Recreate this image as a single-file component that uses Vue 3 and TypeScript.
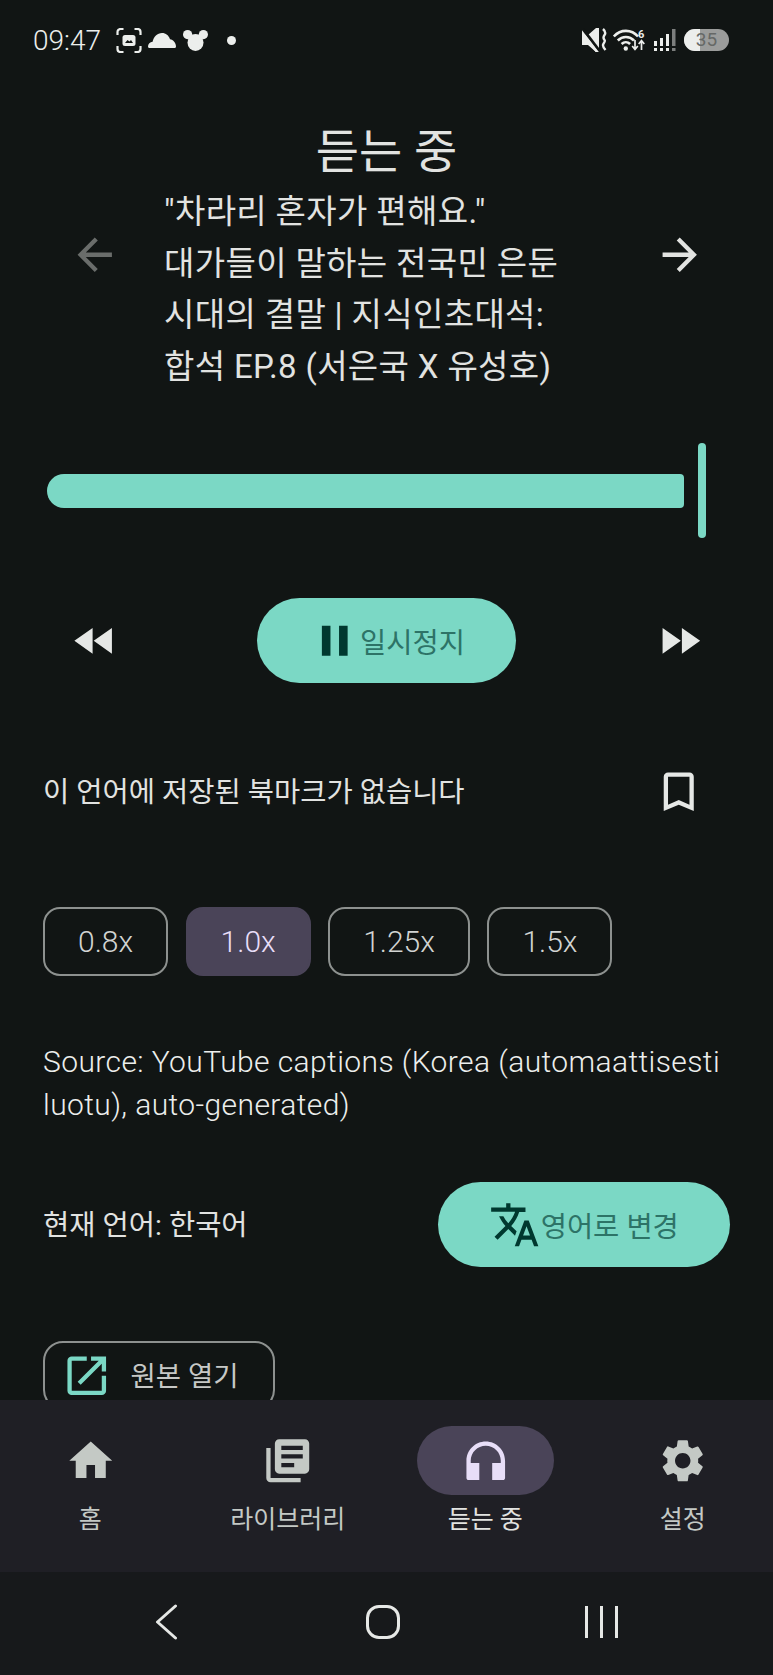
<script setup lang="ts">
import { ref } from 'vue'

const speeds = ['0.8x', '1.0x', '1.25x', '1.5x']
const currentSpeed = ref('1.0x')

const navItems = [
  { label: '홈', path: 'M10 20v-6h4v6h5v-8h3L12 3 2 12h3v8z' },
  {
    label: '라이브러리',
    path: 'M4 6H2v14c0 1.1.9 2 2 2h14v-2H4V6zm16-4H8c-1.1 0-2 .9-2 2v12c0 1.1.9 2 2 2h12c1.1 0 2-.9 2-2V4c0-1.1-.9-2-2-2zm-1 9H9V9h10v2zm-4 4H9v-2h6v2zm4-8H9V5h10v2z',
  },
  {
    label: '듣는 중',
    active: true,
    path: 'M12 3c-4.97 0-9 4.03-9 9v8c0 .55.45 1 1 1h5v-8H5v-1c0-3.87 3.13-7 7-7s7 3.13 7 7v1h-4v8h5c.55 0 1-.45 1-1v-8c0-4.97-4.03-9-9-9z',
  },
  {
    label: '설정',
    path: 'M19.14 12.94c.04-.3.06-.61.06-.94 0-.32-.02-.64-.07-.94l2.03-1.58c.18-.14.23-.41.12-.61l-1.92-3.32c-.12-.22-.37-.29-.59-.22l-2.39.96c-.5-.38-1.03-.7-1.62-.94l-.36-2.54c-.04-.24-.24-.41-.48-.41h-3.84c-.24 0-.43.17-.47.41l-.36 2.54c-.59.24-1.13.57-1.62.94l-2.39-.96c-.22-.08-.47 0-.59.22L2.74 8.87c-.12.21-.08.47.12.61l2.03 1.58c-.05.3-.09.63-.09.94s.02.64.07.94l-2.03 1.58c-.18.14-.23.41-.12.61l1.92 3.32c.12.22.37.29.59.22l2.39-.96c.5.38 1.03.7 1.62.94l.36 2.54c.05.24.24.41.48.41h3.84c.24 0 .44-.17.47-.41l.36-2.54c.59-.24 1.13-.56 1.62-.94l2.39.96c.22.08.47 0 .59-.22l1.92-3.32c.12-.22.07-.47-.12-.61l-2.01-1.58zM12 15.6c-1.98 0-3.6-1.62-3.6-3.6s1.62-3.6 3.6-3.6 3.6 1.62 3.6 3.6-1.62 3.6-3.6 3.6z',
  },
]
</script>

<template>
  <div class="screen">
    <div class="statusbar">
      <span class="clock">09:47</span>
      <svg class="st-shot" width="26" height="25" viewBox="0 0 26 25" fill="none" stroke="#eceeec" stroke-width="2.2">
        <path d="M1.5 7V4a3 3 0 0 1 3-3h3M18.5 1h3a3 3 0 0 1 3 3v3M24.5 18v3a3 3 0 0 1-3 3h-3M7.5 24h-3a3 3 0 0 1-3-3v-3" />
        <rect x="6.5" y="7" width="13" height="11" rx="2.5" fill="#eceeec" stroke="none" />
        <path d="M9 15l2.5-3 2 1.5 1.5-1.5 2 3z" fill="#111514" stroke="none" />
      </svg>
      <svg class="st-cloud" width="28" height="15" viewBox="0 0 28 15" fill="#eceeec">
        <path d="M1.5 15C.5 15 0 14.4 0 13.5c0-2.6 2-4.6 4.6-4.8C5.6 3.8 9.3 0 14 0c3.8 0 6.8 2.5 8 6.2 3.2.5 6 3.6 6 7.3 0 .9-.5 1.5-1.5 1.5z" />
      </svg>
      <svg class="st-mouse" width="25" height="21" viewBox="0 0 25 21" fill="#eceeec">
        <circle cx="4.6" cy="4.6" r="4.6" />
        <circle cx="20.4" cy="4.6" r="4.6" />
        <ellipse cx="12.5" cy="12.5" rx="8" ry="8.5" />
      </svg>
      <span class="st-dot"></span>

      <svg class="st-mute" width="25" height="24" viewBox="0 0 25 24" fill="#eceeec">
        <path d="M0 7h6l8-7h3v24h-3l-8-7H0z" />
        <path d="M0 0l19 25" stroke="#111514" stroke-width="3" />
        <path d="M1 1l17 22" stroke="#eceeec" stroke-width="2.5" transform="translate(-2 2)" />
        <path d="M21 1c2.8 2.6 2.8 4.2 1.5 6s-1.3 3.5 0 5-1.3 3.2-1.5 5 1.2 3.5 2.5 5" fill="none" stroke="#eceeec" stroke-width="2.4" />
      </svg>
      <svg class="st-wifi" width="33" height="24" viewBox="0 0 33 24" fill="none" stroke="#eceeec" stroke-width="2.6">
        <path d="M.8 8.5C7.5 1 18.5 1 25 8.5" />
        <path d="M4.8 12.5c4.5-4.6 11.7-4.6 16.2 0" />
        <path d="M8.6 16c2.5-2.4 6-2.4 8.5 0" />
        <circle cx="12.8" cy="20.5" r="2.2" fill="#eceeec" stroke="none" />
        <path d="M22 12v9m-2.8-3l2.8 3.5 2.8-3.5M28.500 22V13m-2.800 3l2.800-3.500 2.800 3.500" stroke-width="1.7" />
        <text x="25" y="10" class="st-six" fill="#eceeec" stroke="none">6</text>
      </svg>
      <svg class="st-signal" width="22" height="23" viewBox="0 0 22 23" fill="#eceeec">
        <rect x="0" y="12" width="3" height="5" />
        <rect x="0" y="19" width="3" height="3" />
        <rect x="6" y="9" width="3" height="8" />
        <rect x="6" y="19" width="3" height="3" />
        <rect x="12" y="5" width="3" height="12" />
        <rect x="12" y="19" width="3" height="3" />
        <rect x="18" y="0" width="3.5" height="17" fill="#7c7e7d" />
        <rect x="18" y="19" width="3.5" height="3" fill="#7c7e7d" />
      </svg>
      <div class="st-battery"><span class="st-level"></span><span class="st-num">35</span></div>
    </div>

    <div class="content">
      <h1 class="title">듣는 중</h1>
      <div class="track-row">
        <svg class="icon arrow dim" viewBox="0 0 24 24"><path d="M20 11H7.83l5.59-5.59L12 4l-8 8 8 8 1.41-1.41L7.83 13H20v-2z" /></svg>
        <p class="track-title">
          "차라리 혼자가 편해요."<br />대가들이 말하는 전국민 은둔<br />시대의 결말 | 지식인초대석:<br />합석 EP.8 (서은국 X 유성호)
        </p>
        <svg class="icon arrow" viewBox="0 0 24 24"><path d="M12 4l-1.41 1.41L16.17 11H4v2h12.17l-5.58 5.59L12 20l8-8z" /></svg>
      </div>

      <div class="slider">
        <div class="slider-fill"></div>
        <div class="slider-thumb"></div>
      </div>

      <div class="controls">
        <svg class="icon light" viewBox="0 0 24 24"><path d="M11 18V6l-8.5 6 8.5 6zm.5-6l8.5 6V6l-8.5 6z" /></svg>
        <button class="pill pause">
          <svg class="icon dark" viewBox="0 0 24 24"><path d="M6 19h4V5H6v14zm8-14v14h4V5h-4z" /></svg>
          <span>일시정지</span>
        </button>
        <svg class="icon light" viewBox="0 0 24 24"><path d="M4 18l8.5-6L4 6v12zm9-12v12l8.5-6L13 6z" /></svg>
      </div>

      <div class="bookmark-row">
        <span class="raised">이 언어에 저장된 북마크가 없습니다</span>
        <svg class="icon light" viewBox="0 0 24 24"><path d="M17 3H7c-1.1 0-2 .9-2 2v16l7-3 7 3V5c0-1.1-.9-2-2-2zm0 15l-5-2.18L7 18V5h10v13z" /></svg>
      </div>

      <div class="speeds">
        <button v-for="s in speeds" :key="s" class="chip" :class="{ on: s === currentSpeed }" @click="currentSpeed = s">{{ s }}</button>
      </div>

      <p class="source">Source: YouTube captions (Korea (automaattisesti<br />luotu), auto-generated)</p>

      <div class="lang-row">
        <span class="raised">현재 언어: 한국어</span>
        <button class="pill translate">
          <svg class="icon dark" viewBox="0 0 24 24"><path d="M12.87 15.07l-2.54-2.51.03-.03c1.74-1.94 2.98-4.17 3.71-6.53H17V4h-7V2H8v2H1v1.99h11.17C11.5 7.92 10.44 9.75 9 11.35 8.07 10.32 7.3 9.19 6.69 8h-2c.73 1.63 1.73 3.17 2.98 4.56l-5.09 5.02L4 19l5-5 3.11 3.11.76-2.04zM18.5 10h-2L12 22h2l1.12-3h4.75L21 22h2l-4.5-12zm-2.62 7l1.62-4.33L19.12 17h-3.24z" /></svg>
          <span>영어로 변경</span>
        </button>
      </div>

      <button class="open-btn">
        <svg class="icon teal" viewBox="0 0 24 24"><path d="M19 19H5V5h7V3H5c-1.11 0-2 .9-2 2v14c0 1.1.89 2 2 2h14c1.1 0 2-.9 2-2v-7h-2v7zM14 3v2h3.59l-9.83 9.83 1.41 1.41L19 6.41V10h2V3h-7z" /></svg>
        <span class="raised">원본 열기</span>
      </button>
    </div>

    <nav class="bottom-nav">
      <div v-for="item in navItems" :key="item.label" class="nav-item" :class="{ active: item.active }">
        <div class="nav-pill">
          <svg class="icon" viewBox="0 0 24 24"><path :d="item.path" /></svg>
        </div>
        <span class="nav-label">{{ item.label }}</span>
      </div>
    </nav>

    <div class="sysnav">
      <svg width="23" height="36" viewBox="0 0 23 36" fill="none" stroke="#e6e8e6" stroke-width="3" stroke-linecap="round" stroke-linejoin="round">
        <path d="M20.5 2L2.5 18l18 16" />
      </svg>
      <span class="sys-home"></span>
      <span class="sys-recent"><i></i><i></i><i></i></span>
    </div>
  </div>
</template>

<style scoped>
.screen {
  width: 773px;
  height: 1675px;
  display: flex;
  flex-direction: column;
  background: #111514;
  color: #e2e3e1;
  font-family: Roboto, "Noto Sans CJK KR", sans-serif;
  overflow: hidden;
}

.icon {
  width: 51.5px;
  height: 51.5px;
  flex: none;
  fill: currentColor;
  display: block;
}
.light { color: #e6e8e6; }
.dark { color: #00382f; }
.teal { color: #7bd8c5; }
.dim { color: #6a6d6b; }
.raised { padding-bottom: 4px; }

/* status bar */
.statusbar {
  height: 80px;
  flex: none;
  display: flex;
  align-items: center;
  padding-left: 33px;
}
.clock {
  font-size: 28px;
  font-weight: 300;
  color: #eceeec;
  width: 83px;
}
.st-cloud { margin-left: 6px; }
.st-mouse { margin-left: 7px; }
.st-dot {
  width: 9px;
  height: 9px;
  border-radius: 50%;
  background: #eceeec;
  margin-left: 19px;
}
.st-mute { margin-left: 346px; }
.st-wifi { margin-left: 6px; }
.st-six { font-size: 11px; font-weight: 700; font-family: Roboto, sans-serif; }
.st-signal { margin-left: 8px; }
.st-battery {
  position: relative;
  width: 45px;
  height: 22px;
  margin-left: 8px;
  border-radius: 11px;
  background: #9b9c9b;
  overflow: hidden;
}
.st-level {
  position: absolute;
  left: 0;
  top: 0;
  bottom: 0;
  width: 16px;
  background: #eceeec;
}
.st-num {
  position: absolute;
  inset: 0;
  text-align: center;
  font-size: 19px;
  line-height: 22px;
  color: #666866;
}

/* main content */
.content {
  flex: 1;
  min-height: 0;
  overflow: hidden;
}
.title {
  margin: 42px 0 0;
  text-align: center;
  font-size: 47px;
  line-height: 60px;
  font-weight: 400;
}
.track-row {
  margin-top: 4px;
  padding: 0 68px 0 68.5px;
  display: flex;
  justify-content: space-between;
  align-items: flex-start;
}
.arrow { margin-top: 43px; }
.track-title {
  flex: 1;
  margin: 0 0 0 44px;
  font-size: 33px;
  letter-spacing: 0.35px;
  line-height: 51.5px;
}
.slider {
  margin: 51px 67px 0 47px;
  height: 95px;
  display: flex;
  align-items: center;
  gap: 14px;
}
.slider-fill {
  flex: 1;
  height: 34px;
  background: #7bd8c5;
  border-radius: 17px 4px 4px 17px;
}
.slider-thumb {
  width: 8px;
  height: 95px;
  border-radius: 4px;
  background: #7bd8c5;
}
.controls {
  margin-top: 60px;
  padding: 0 68px 0 68.5px;
  display: flex;
  justify-content: space-between;
  align-items: center;
}
.pill {
  border: 0;
  padding: 0;
  height: 85px;
  border-radius: 43px;
  background: #7bd8c5;
  color: #2d7367;
  font-family: inherit;
  font-size: 28.5px;
  display: flex;
  align-items: center;
  justify-content: center;
}
.pause { width: 259px; }
.bookmark-row {
  margin-top: 82.5px;
  padding: 0 69px 0 43px;
  display: flex;
  justify-content: space-between;
  align-items: center;
  font-size: 28.5px;
}
.speeds {
  margin: 90px 0 0 43px;
  display: flex;
  gap: 17.5px;
}
.chip {
  height: 69px;
  padding: 0 33px;
  box-sizing: border-box;
  border: 2px solid #8d918f;
  border-radius: 17px;
  background: transparent;
  color: #d2d4d2;
  font-family: inherit;
  font-size: 30px;
  font-weight: 300;
}
.chip.on {
  background: #4a4458;
  border-color: #4a4458;
  color: #e8def8;
}
.source {
  margin: 64px 0 0 43px;
  font-size: 30px;
  font-weight: 300;
  color: #eceeec;
  letter-spacing: 0.4px;
  line-height: 43px;
  white-space: nowrap;
}
.lang-row {
  margin-top: 56px;
  padding: 0 43px;
  display: flex;
  justify-content: space-between;
  align-items: center;
  font-size: 28.5px;
}
.translate { width: 292px; }
.open-btn {
  margin: 74px 0 0 43px;
  width: 232px;
  height: 69px;
  box-sizing: border-box;
  padding: 0 0 0 16px;
  border: 2px solid #8d918f;
  border-radius: 20px;
  background: transparent;
  color: #c6c8c6;
  font-family: inherit;
  font-size: 27.5px;
  display: flex;
  align-items: center;
  gap: 18px;
}

/* bottom navigation */
.bottom-nav {
  height: 172px;
  flex: none;
  background: #1f1f25;
  display: grid;
  grid-template-columns: repeat(4, 197.5px);
  justify-content: center;
  padding-top: 26px;
  box-sizing: border-box;
}
.nav-item {
  display: flex;
  flex-direction: column;
  align-items: center;
  color: #c4c9c5;
}
.nav-pill {
  width: 137px;
  height: 69px;
  border-radius: 35px;
  display: flex;
  align-items: center;
  justify-content: center;
}
.nav-item.active .nav-pill {
  background: #4a4458;
  color: #e8def8;
}
.nav-item.active .nav-label { color: #e2e3e1; }
.nav-label {
  margin-top: 8px;
  font-size: 25px;
  line-height: 34px;
}

/* system navigation */
.sysnav {
  height: 103px;
  flex: none;
  background: #17191b;
  display: flex;
  align-items: center;
  padding: 0 0 4px 155px;
  box-sizing: border-box;
}
.sys-home {
  width: 34px;
  height: 34px;
  box-sizing: border-box;
  border: 3px solid #e6e8e6;
  border-radius: 13px;
  margin-left: 188px;
}
.sys-recent {
  display: flex;
  gap: 12px;
  margin-left: 185px;
}
.sys-recent i {
  width: 3px;
  height: 32px;
  background: #e6e8e6;
}
</style>
